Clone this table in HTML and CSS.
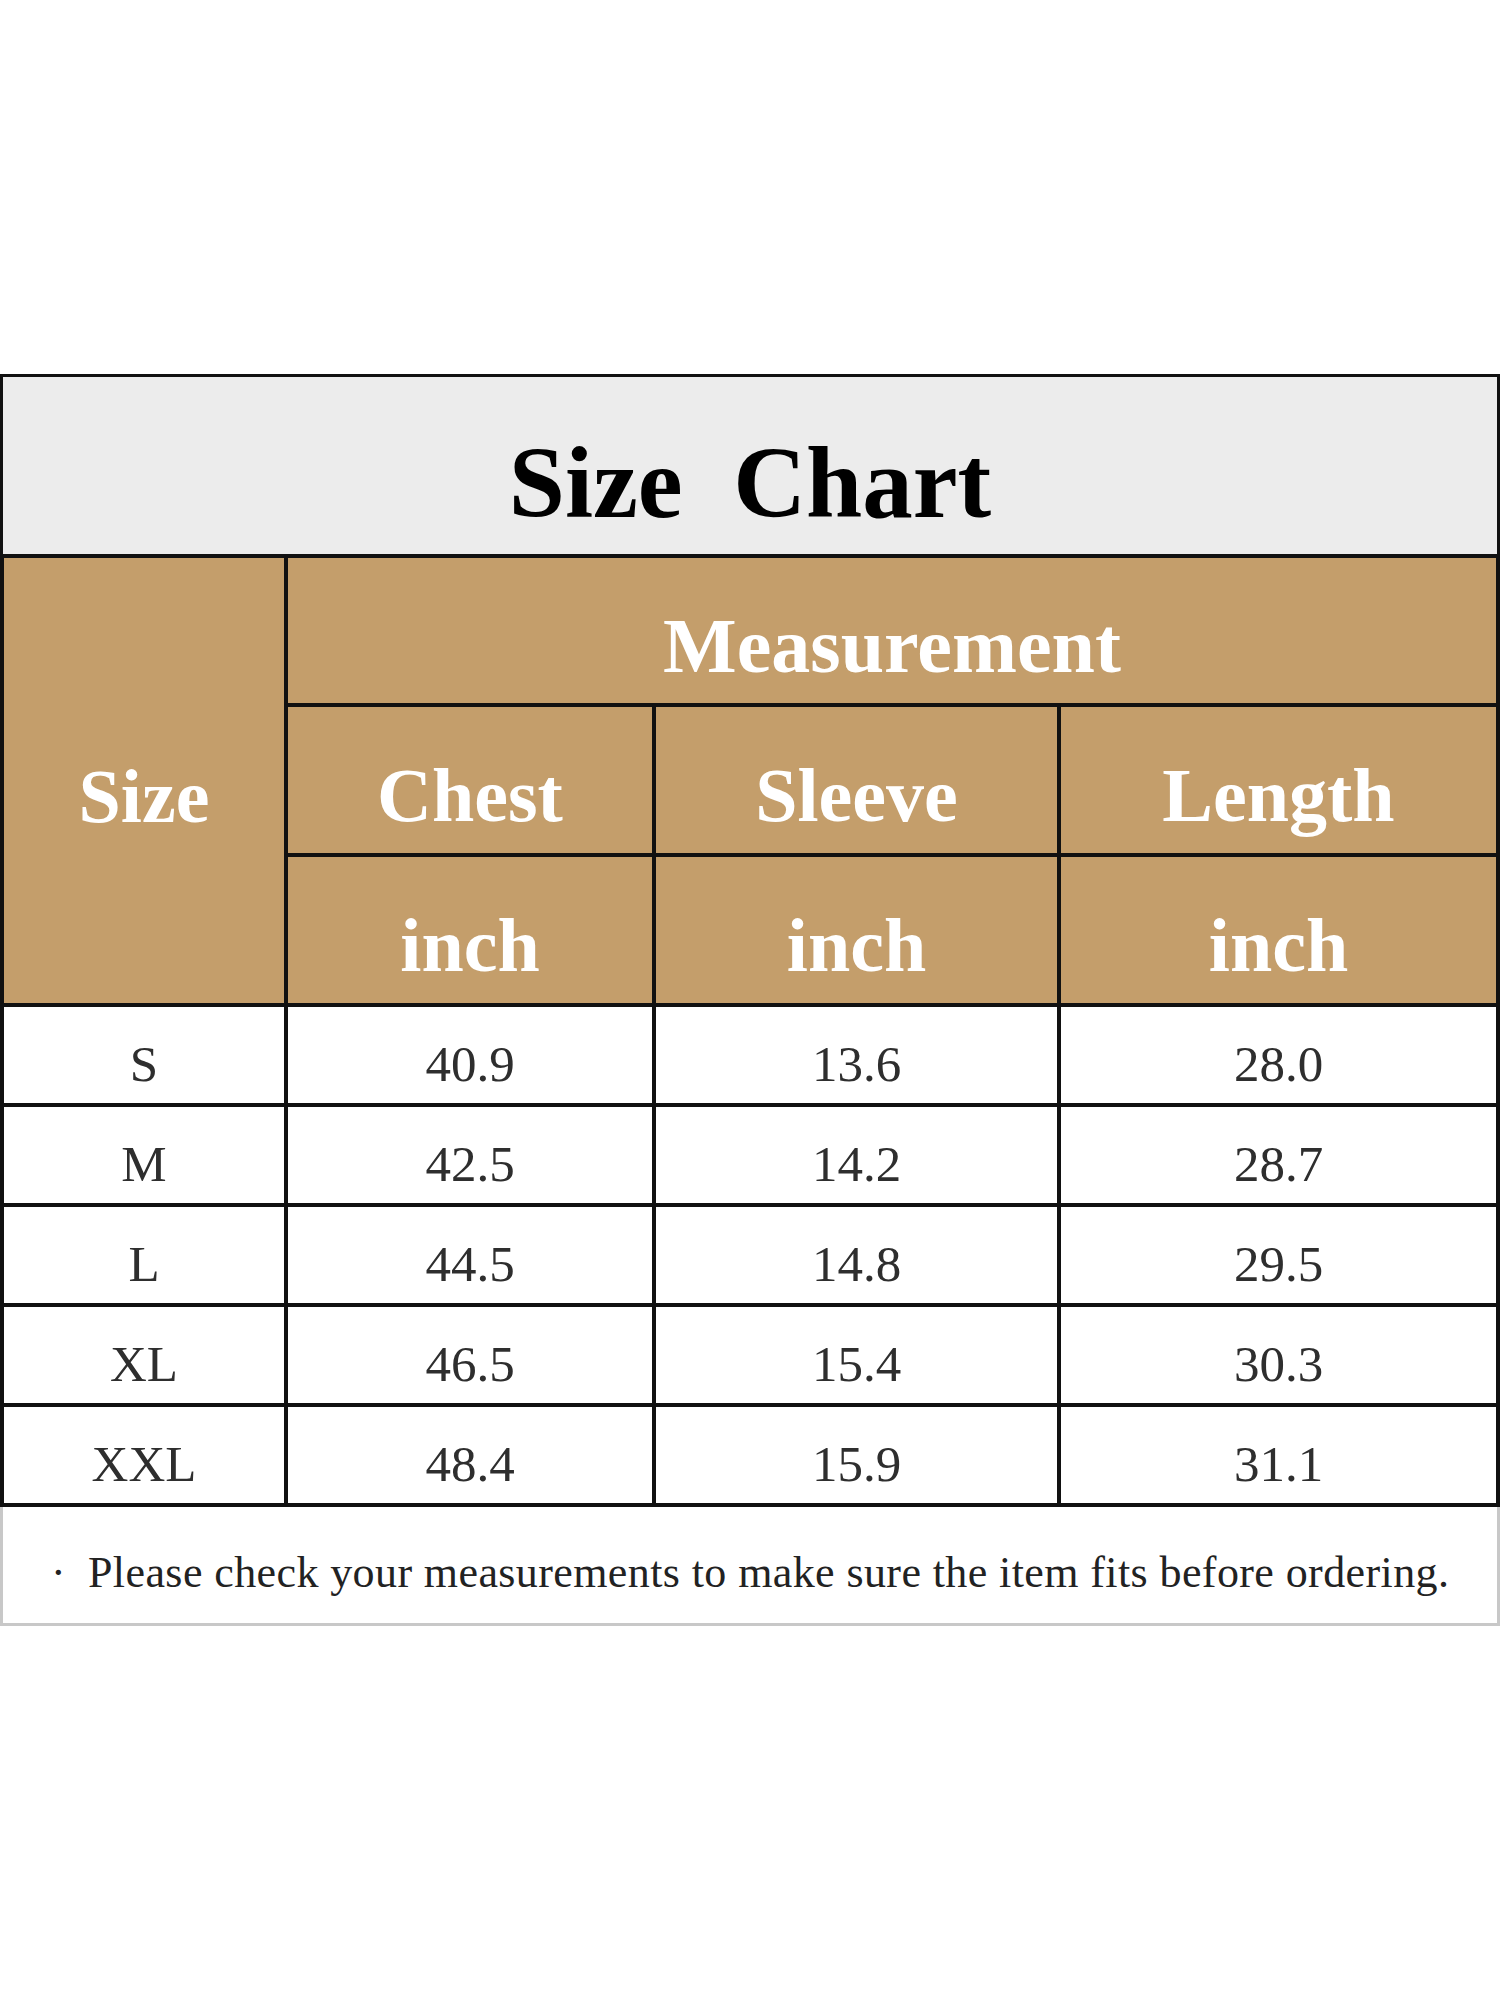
FILE: index.html
```html
<!DOCTYPE html>
<html lang="en">
<head>
<meta charset="utf-8">
<title>Size Chart</title>
<link rel="stylesheet" href="styles.css">
</head>
<body>
<div class="chart">
  <div class="title">Size&nbsp; Chart</div>
  <div class="grid">
    <div class="hcell size">Size</div>
    <div class="hcell meas">Measurement</div>
    <div class="hcell">Chest</div>
    <div class="hcell">Sleeve</div>
    <div class="hcell">Length</div>
    <div class="hcell">inch</div>
    <div class="hcell">inch</div>
    <div class="hcell">inch</div>

    <div class="dcell">S</div><div class="dcell">40.9</div><div class="dcell">13.6</div><div class="dcell">28.0</div>
    <div class="dcell">M</div><div class="dcell">42.5</div><div class="dcell">14.2</div><div class="dcell">28.7</div>
    <div class="dcell">L</div><div class="dcell">44.5</div><div class="dcell">14.8</div><div class="dcell">29.5</div>
    <div class="dcell">XL</div><div class="dcell">46.5</div><div class="dcell">15.4</div><div class="dcell">30.3</div>
    <div class="dcell">XXL</div><div class="dcell">48.4</div><div class="dcell">15.9</div><div class="dcell">31.1</div>
  </div>
  <div class="note"><span class="bullet">·</span>Please check your measurements to make sure the item fits before ordering.</div>
</div>
</body>
</html>
```

FILE: styles.css
```css
html, body {
  margin: 0;
  padding: 0;
  background: #ffffff;
}

body {
  width: 1500px;
  font-family: "Liberation Serif", "Times New Roman", serif;
}

.chart {
  margin-top: 374px;
  width: 1500px;
}

.title {
  box-sizing: border-box;
  height: 180px;
  border: 3px solid #111;
  border-bottom: none;
  background: #ececec;
  text-align: center;
  font-weight: bold;
  font-size: 101px;
  line-height: 144px;
  padding-top: 34px;
  color: #000;
}

.grid {
  display: grid;
  grid-template-columns: 280px 364px 401px 435px;
  grid-template-rows: 145px 146px 146px repeat(5, 96px);
  gap: 4px;
  padding: 4px;
  background: #111;
}

.hcell {
  background: #c49e6b;
  color: #ffffff;
  font-weight: bold;
  font-size: 76px;
  display: flex;
  align-items: center;
  justify-content: center;
  padding-top: 31px;
  box-sizing: border-box;
}

.size {
  grid-row: 1 / 4;
}

.meas {
  grid-column: 2 / 5;
  font-size: 78px;
}

.dcell {
  background: #ffffff;
  color: #2e2e2e;
  font-size: 51px;
  display: flex;
  align-items: center;
  justify-content: center;
  padding-top: 18px;
  box-sizing: border-box;
}

.note {
  box-sizing: border-box;
  height: 119px;
  border: 3px solid #c8c8c8;
  border-top: none;
  background: #fff;
  font-size: 44px;
  letter-spacing: 0.4px;
  line-height: 100px;
  padding-top: 16px;
  padding-left: 48px;
  color: #222;
  white-space: nowrap;
}

.bullet {
  display: inline-block;
  width: 37px;
}
```
